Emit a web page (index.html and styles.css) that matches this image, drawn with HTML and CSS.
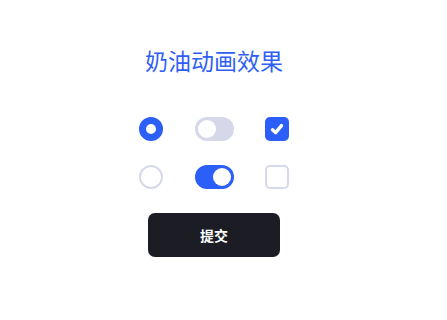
FILE: index.html
```html
<!DOCTYPE html>
<html lang="zh">
<head>
<meta charset="utf-8">
<link rel="stylesheet" href="styles.css">
</head>
<body>
<main class="page">
  <h1 class="title">奶油动画效果</h1>
  <div class="controls">
    <span class="radio radio-on"></span>
    <span class="toggle"><span class="knob"></span></span>
    <span class="check check-on">
      <svg viewBox="0 0 24 24" width="24" height="24"><path d="M7.5 12.8 L10.6 15.6 L16.5 8.6" fill="none" stroke="#fff" stroke-width="3.4" stroke-linecap="round" stroke-linejoin="round"/></svg>
    </span>
    <span class="radio"></span>
    <span class="toggle toggle-on"><span class="knob"></span></span>
    <span class="check"></span>
  </div>
  <button class="submit">提交</button>
</main>
</body>
</html>
```

FILE: styles.css
```css
html, body {
  margin: 0;
  padding: 0;
  background: #ffffff;
}
.page {
  width: 428px;
  display: flex;
  flex-direction: column;
  align-items: center;
  padding-top: 44px;
  font-family: "Noto Sans CJK SC", "Noto Sans", sans-serif;
}
.title {
  margin: 0;
  font-size: 23px;
  line-height: 32px;
  font-weight: 400;
  color: #2f5ff5;
}
.controls {
  margin-top: 41px;
  display: grid;
  grid-template-columns: repeat(3, 63px);
  grid-auto-rows: 24px;
  row-gap: 24px;
  justify-items: center;
  align-items: center;
}
.radio {
  box-sizing: border-box;
  width: 24px;
  height: 24px;
  border-radius: 50%;
  border: 2px solid #d6d9ea;
  background: #fff;
}
.radio-on {
  border: 7px solid #2b5ff8;
}
.toggle {
  box-sizing: border-box;
  width: 39px;
  height: 24px;
  border-radius: 12px;
  background: #d5d8e8;
  padding: 3px;
  display: flex;
}
.knob {
  width: 18px;
  height: 18px;
  border-radius: 50%;
  background: #fff;
}
.toggle-on {
  background: #2b5ff8;
  justify-content: flex-end;
}
.check {
  box-sizing: border-box;
  width: 24px;
  height: 24px;
  border-radius: 5px;
  border: 2px solid #d6d9ea;
  background: #fff;
  display: flex;
}
.check-on {
  border: none;
  background: #2b5ff8;
}
.submit {
  margin-top: 24px;
  width: 132px;
  height: 44px;
  border: none;
  border-radius: 7px;
  background: #1c1d24;
  color: #ffffff;
  font-family: "Noto Sans CJK SC", "Noto Sans", sans-serif;
  font-size: 14px;
  font-weight: 700;
  padding: 0;
}
```
